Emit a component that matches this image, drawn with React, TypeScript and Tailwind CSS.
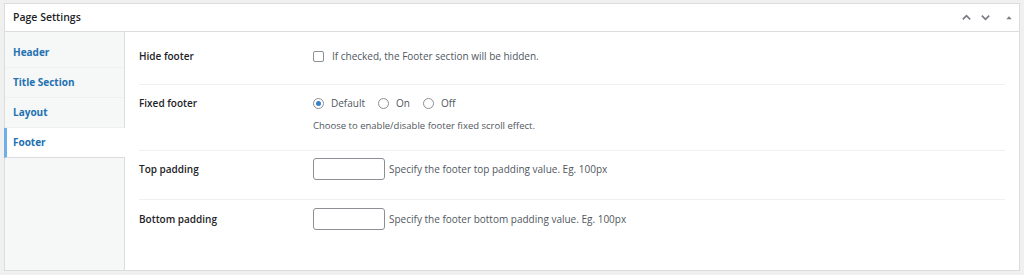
import React from "react";

const tabs = ["Header", "Title Section", "Layout", "Footer"];

function Radio({ checked, label }: { checked?: boolean; label: string }) {
  return (
    <label className="flex items-center gap-[7px] mr-[13px]">
      <span className="w-[11px] h-[11px] rounded-full border border-[#8c8f94] flex items-center justify-center bg-white">
        {checked && <span className="w-[5px] h-[5px] rounded-full bg-[#3582c4]" />}
      </span>
      <span>{label}</span>
    </label>
  );
}

export default function App() {
  return (
    <div
      className="w-[1024px] h-[275px] bg-[#f0f0f1] pt-[3px] px-[4px] text-[10px] text-[#50575e]"
      style={{ fontFamily: '"Open Sans", "Noto Sans", sans-serif' }}
    >
      <div className="border border-[#dcdcde] bg-white h-[268px] flex flex-col">
        <div className="h-[28px] border-b border-[#dcdcde] flex items-center pl-[8px] pr-[4px] shrink-0">
          <h2 className="text-[10.5px] font-semibold text-[#1d2327] flex-1">Page Settings</h2>
          <div className="flex items-center gap-[8px] text-[#787c82]">
            <svg width="11" height="11" viewBox="0 0 12 12" fill="none" stroke="currentColor" strokeWidth="1.8">
              <path d="M2 8 L6 4 L10 8" />
            </svg>
            <svg width="11" height="11" viewBox="0 0 12 12" fill="none" stroke="currentColor" strokeWidth="1.8">
              <path d="M2 4 L6 8 L10 4" />
            </svg>
            <svg width="12" height="11" viewBox="0 0 12 12" className="ml-[4px]" fill="currentColor">
              <path d="M3 8 L6 4.5 L9 8 Z" />
            </svg>
          </div>
        </div>
        <div className="flex flex-1">
          <ul className="w-[120px] bg-[#f6f7f7] border-r border-[#dcdcde] pt-[6px] shrink-0">
            {tabs.map((t) => {
              const active = t === "Footer";
              return (
                <li
                  key={t}
                  className={`h-[30px] flex items-center border-b border-[#dcdcde] font-bold text-[10px] text-[#2271b1] ${
                    active
                      ? "bg-white -ml-[1px] mr-[-1px] border-l-[3px] border-l-[#72aee6] pl-[6px]"
                      : "pl-[8px] border-b-[#f0f0f1]"
                  }`}
                >
                  {t}
                </li>
              );
            })}
          </ul>
          <div className="flex-1 pt-[5px] px-[14px]">
            <div className="h-[48px] border-b border-[#f0f0f1] pt-[12px] flex">
              <div className="w-[174px] h-[14px] flex items-center font-semibold text-[#1d2327]">Hide footer</div>
              <div className="h-[14px] flex items-center gap-[8px]">
                <span className="w-[11px] h-[11px] rounded-[2px] border border-[#8c8f94] bg-white" />
                <span>If checked, the Footer section will be hidden.</span>
              </div>
            </div>
            <div className="h-[66px] border-b border-[#f0f0f1] pt-[11px] flex">
              <div className="w-[174px] h-[14px] flex items-center font-semibold text-[#1d2327]">Fixed footer</div>
              <div>
                <div className="h-[14px] flex items-center">
                  <Radio checked label="Default" />
                  <Radio label="On" />
                  <Radio label="Off" />
                </div>
                <p className="mt-[9px] text-[9.5px] text-[#50575e]">Choose to enable/disable footer fixed scroll effect.</p>
              </div>
            </div>
            <div className="h-[49px] border-b border-[#f0f0f1] pt-[7px] flex">
              <div className="w-[174px] h-[22px] flex items-center font-semibold text-[#1d2327]">Top padding</div>
              <div className="h-[22px] flex items-center gap-[4px]">
                <input className="w-[72px] h-[22px] border border-[#8c8f94] rounded-[3px] bg-white" />
                <span>Specify the footer top padding value. Eg. 100px</span>
              </div>
            </div>
            <div className="pt-[8px] flex">
              <div className="w-[174px] h-[22px] flex items-center font-semibold text-[#1d2327]">Bottom padding</div>
              <div className="h-[22px] flex items-center gap-[4px]">
                <input className="w-[72px] h-[22px] border border-[#8c8f94] rounded-[3px] bg-white" />
                <span>Specify the footer bottom padding value. Eg. 100px</span>
              </div>
            </div>
          </div>
        </div>
      </div>
    </div>
  );
}
